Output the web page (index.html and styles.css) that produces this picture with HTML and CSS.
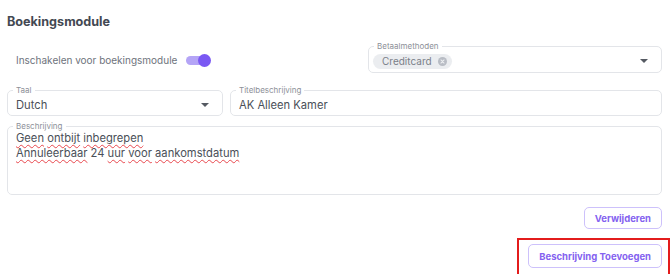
FILE: index.html
```
<!DOCTYPE html>
<html lang="nl">
<head>
<meta charset="utf-8">
<title>Boekingsmodule</title>
<link rel="stylesheet" href="styles.css">
</head>
<body>
<section class="module">
  <h2 class="title">Boekingsmodule</h2>

  <div class="row row-top">
    <div class="toggle-wrap">
      <span class="toggle-label">Inschakelen voor boekingsmodule</span>
      <span class="toggle"><span class="knob"></span></span>
    </div>
    <fieldset class="field field-pay">
      <legend>Betaalmethoden</legend>
      <div class="field-body">
        <span class="chip">Creditcard <span class="chip-x"><svg viewBox="0 0 10 10" width="9" height="9"><circle cx="5" cy="5" r="5" fill="#b8bcc4"/><path d="M3.3 3.3 6.7 6.7M6.7 3.3 3.3 6.7" stroke="#eceef1" stroke-width="1.2" stroke-linecap="round"/></svg></span></span>
        <span class="caret"></span>
      </div>
    </fieldset>
  </div>

  <div class="row row-mid">
    <fieldset class="field field-lang">
      <legend>Taal</legend>
      <div class="field-body">
        <span class="value">Dutch</span>
        <span class="caret"></span>
      </div>
    </fieldset>
    <fieldset class="field field-titel">
      <legend>Titelbeschrijving</legend>
      <div class="field-body">
        <span class="value">AK Alleen Kamer</span>
      </div>
    </fieldset>
  </div>

  <fieldset class="field field-desc">
    <legend>Beschrijving</legend>
    <div class="desc-text">
      <div><span class="sp">Geen</span> <span class="sp">ontbijt</span> <span class="sp">inbegrepen</span></div>
      <div><span class="sp">Annuleerbaar</span> 24 <span class="sp">uur</span> <span class="sp">voor</span> <span class="sp">aankomstdatum</span></div>
    </div>
  </fieldset>

  <div class="actions">
    <button class="btn">Verwijderen</button>
  </div>
  <div class="actions actions-add">
    <span class="highlight"><button class="btn">Beschrijving Toevoegen</button></span>
  </div>
</section>
</body>
</html>
```
FILE: styles.css
```
* { box-sizing: border-box; }
html, body { margin: 0; padding: 0; background: #fff; }
body {
  font-family: Inter, "Noto Sans", "Liberation Sans", sans-serif;
  color: #4a4f58;
}
.module {
  width: 662px;
  padding: 14px 0 0 7px;
}
.title {
  margin: 0;
  font-size: 12.6px;
  font-weight: 700;
  line-height: 15px;
  color: #434852;
}
.row {
  display: flex;
  gap: 7px;
}
.row-top {
  margin-top: 13px;
  align-items: flex-end;
}
.toggle-wrap {
  flex: 1;
  display: flex;
  align-items: center;
  gap: 9px;
  padding: 0 0 7px 9px;
}
.toggle-label {
  font-size: 10px;
  color: #6e737c;
}
.toggle {
  width: 23px;
  height: 9px;
  border-radius: 5px;
  background: #b4a4f6;
  display: flex;
  align-items: center;
  justify-content: flex-end;
}
.knob {
  width: 13px;
  height: 13px;
  border-radius: 50%;
  background: #7a58f3;
  margin-right: -2px;
}
.field {
  margin: 0;
  padding: 0 8px 0 8px;
  border: 1px solid #e3e5e9;
  border-radius: 5px;
  min-width: 0;
}
.field legend {
  font-size: 8px;
  line-height: 8px;
  color: #8d9098;
  padding: 0 3px;
  margin-left: -3px;
}
.field-body {
  display: flex;
  align-items: center;
  justify-content: space-between;
}
.field-pay { width: 294px; }
.field-pay .field-body { height: 22px; margin-left: -4px; }
.chip {
  display: inline-flex;
  align-items: center;
  gap: 6px;
  height: 15px;
  padding: 0 5px 0 9px;
  border-radius: 8px;
  background: #ebedf0;
  font-size: 10px;
  color: #7a7f88;
}
.chip-x { display: inline-flex; }
.caret {
  width: 0;
  height: 0;
  border-left: 4px solid transparent;
  border-right: 4px solid transparent;
  border-top: 4px solid #555a62;
  margin-right: 5px;
}
.row-mid { margin-top: 13px; }
.field-lang { width: 216px; }
.field-titel { flex: 1; }
.field-lang .field-body, .field-titel .field-body { height: 21px; }
.value {
  font-size: 11.2px;
  color: #4a4f58;
}
.field-desc {
  margin-top: 6px;
  height: 73px;
}
.desc-text {
  font-size: 11.2px;
  line-height: 15px;
  color: #4a4f58;
  padding-top: 1px;
}
.sp {
  text-decoration: underline wavy #e8484e;
  text-decoration-thickness: 1px;
  text-underline-offset: 2px;
}
.actions {
  display: flex;
  justify-content: flex-end;
  margin-top: 12px;
}
.actions-add { margin-top: 11px; }
.btn {
  font-family: inherit;
  font-size: 9.5px;
  font-weight: 700;
  color: #8462f0;
  background: #fff;
  border: 1px solid #cdc1fb;
  border-radius: 5px;
  height: 22px;
  padding: 0 10px;
  cursor: pointer;
}
.highlight {
  display: inline-flex;
  padding: 4px 6px 6px 9px;
  margin-right: -6px;
  outline: 2px solid #e31c1c;
}
.highlight .btn { height: 24px; }
```
